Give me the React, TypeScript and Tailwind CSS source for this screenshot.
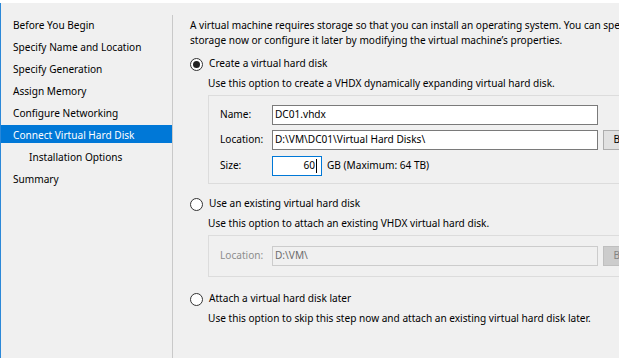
import React from "react";

const font = { fontFamily: '"Noto Sans", "Segoe UI", sans-serif' };

function Radio({ checked }: { checked?: boolean }) {
  return (
    <div className="w-[13px] h-[13px] rounded-full border border-[#333333] bg-white flex items-center justify-center shrink-0">
      {checked && <div className="w-[7px] h-[7px] rounded-full bg-[#222222]" />}
    </div>
  );
}

const items = [
  { label: "Before You Begin" },
  { label: "Specify Name and Location" },
  { label: "Specify Generation" },
  { label: "Assign Memory" },
  { label: "Configure Networking" },
  { label: "Connect Virtual Hard Disk", active: true },
  { label: "Installation Options", sub: true },
  { label: "Summary" },
];

export default function App() {
  return (
    <div
      className="w-[619px] h-[358px] bg-[#f0f0f0] flex flex-col overflow-hidden text-[10.1px] text-black"
      style={font}
    >
      <div className="h-[3px] bg-white shrink-0" />
      <div className="flex flex-1 min-h-0">
        <div className="w-[1px] bg-[#2b88d8] shrink-0" />
        <div className="w-[171px] shrink-0 pt-[10px]">
          {items.map((it) => (
            <div key={it.label} className="h-[22px] py-[2px]">
              <div
                className={
                  "h-[18px] flex items-center leading-[18px] pt-[2px] " +
                  (it.sub ? "pl-[28px] " : "pl-[12px] ") +
                  (it.active ? "bg-[#0078d7] text-white" : "")
                }
              >
                {it.label}
              </div>
            </div>
          ))}
        </div>
        <div className="flex flex-col shrink-0 w-[1px] pt-[12px]">
          <div className="flex-1 bg-[#c9c9c9]" />
        </div>
        <div className="flex-1 min-w-0 flex flex-col pl-[17px] pt-[15px]">
          <div className="leading-[15px] whitespace-nowrap">
            <div>A virtual machine requires storage so that you can install an operating system. You can specify the</div>
            <div>storage now or configure it later by modifying the virtual machine’s properties.</div>
          </div>

          <div className="mt-[8px] h-[16px] flex items-center gap-[6px]">
            <Radio checked />
            <span>Create a virtual hard disk</span>
          </div>
          <div className="mt-[4px] h-[15px] pl-[18px] flex items-center whitespace-nowrap">
            Use this option to create a VHDX dynamically expanding virtual hard disk.
          </div>

          <div className="mt-[4px] ml-[18px] w-[470px] shrink-0 border border-[#dcdcdc] pl-[11px] pt-[9px] pb-[7px] flex flex-col">
            <div className="flex items-center h-[20px]">
              <span className="w-[52px] shrink-0">Name:</span>
              <div className="w-[326px] shrink-0 h-[20px] border border-[#7a7a7a] bg-white flex items-center px-[2px]">
                DC01.vhdx
              </div>
            </div>
            <div className="flex items-center h-[20px] mt-[5px]">
              <span className="w-[52px] shrink-0">Location:</span>
              <div className="w-[326px] shrink-0 h-[20px] border border-[#7a7a7a] bg-white flex items-center px-[2px] whitespace-nowrap">
                D:\VM\DC01\Virtual Hard Disks\
              </div>
              <div className="ml-[5px] w-[64px] shrink-0 h-[20px] border border-[#adadad] bg-[#e1e1e1] flex items-center justify-center">
                Browse...
              </div>
            </div>
            <div className="flex items-center h-[20px] mt-[6px]">
              <span className="w-[52px] shrink-0">Size:</span>
              <div className="w-[50px] shrink-0 h-[20px] border border-[#0078d7] bg-white flex items-center justify-end pr-[4px]">
                <span>60</span>
                <span className="w-[1px] h-[14px] bg-black ml-[1px]" />
              </div>
              <span className="ml-[5px]">GB (Maximum: 64 TB)</span>
            </div>
          </div>

          <div className="mt-[12px] h-[16px] flex items-center gap-[6px]">
            <Radio />
            <span>Use an existing virtual hard disk</span>
          </div>
          <div className="mt-[4px] h-[15px] pl-[18px] flex items-center whitespace-nowrap">
            Use this option to attach an existing VHDX virtual hard disk.
          </div>

          <div className="mt-[4px] ml-[18px] w-[470px] shrink-0 border border-[#dcdcdc] pl-[11px] pt-[10px] pb-[10px] flex flex-col">
            <div className="flex items-center h-[20px]">
              <span className="w-[52px] shrink-0 text-[#8d8d8d]">Location:</span>
              <div className="w-[326px] shrink-0 h-[20px] border border-[#cccccc] bg-[#f0f0f0] flex items-center px-[2px] text-[#6d6d6d]">
                D:\VM\
              </div>
              <div className="ml-[5px] w-[64px] shrink-0 h-[20px] border border-[#bfbfbf] bg-[#cccccc] flex items-center justify-center text-[#838383]">
                Browse...
              </div>
            </div>
          </div>

          <div className="mt-[14px] h-[16px] flex items-center gap-[6px]">
            <Radio />
            <span>Attach a virtual hard disk later</span>
          </div>
          <div className="mt-[4px] h-[15px] pl-[18px] flex items-center whitespace-nowrap">
            Use this option to skip this step now and attach an existing virtual hard disk later.
          </div>
        </div>
      </div>
    </div>
  );
}
